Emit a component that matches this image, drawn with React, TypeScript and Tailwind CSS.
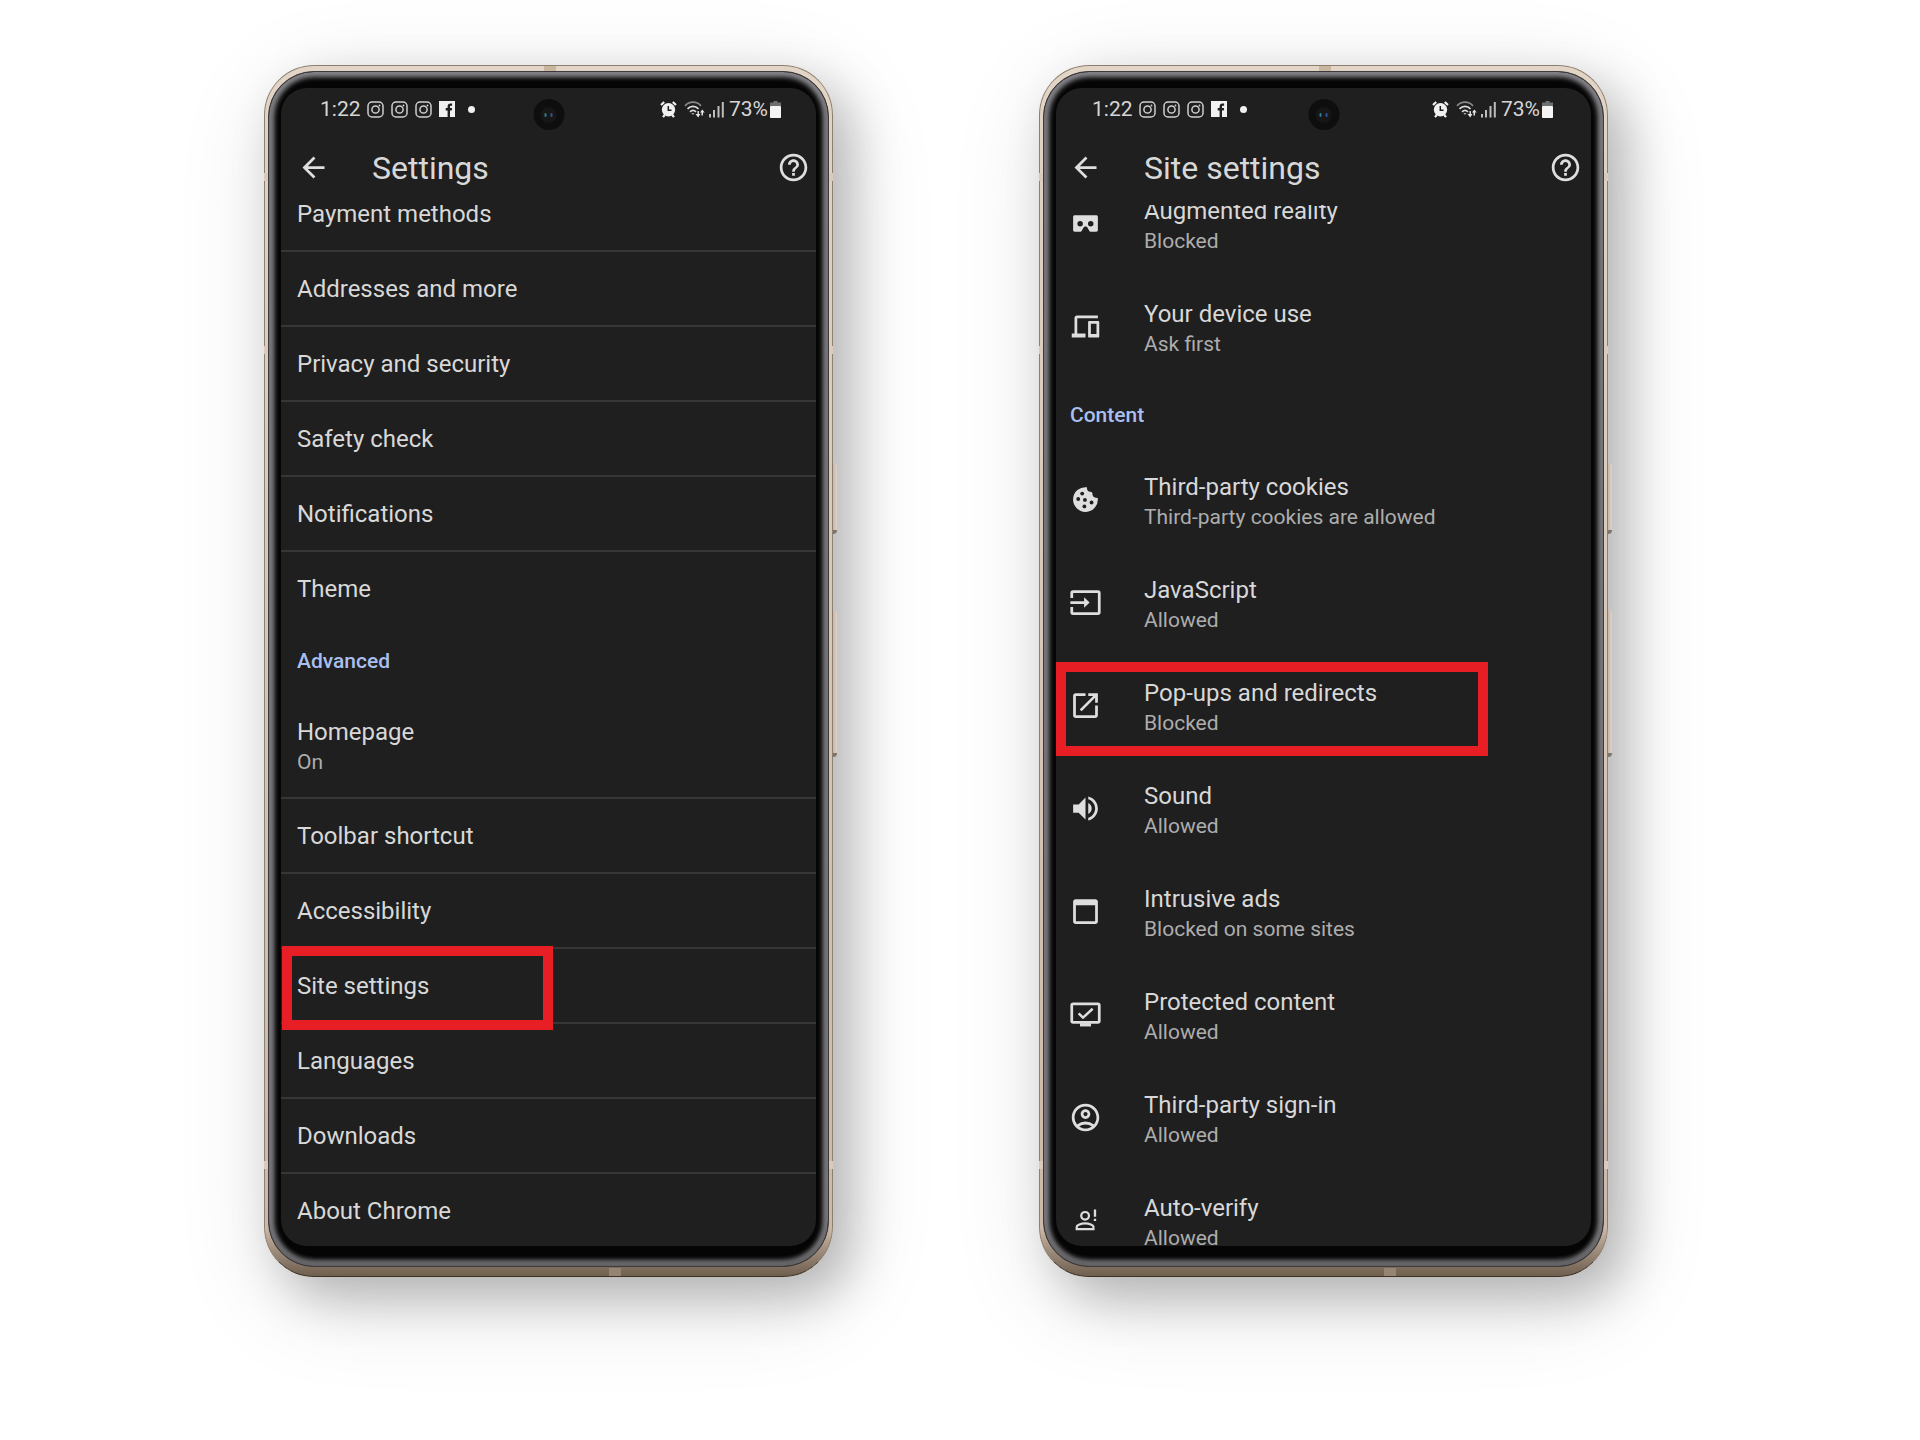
import type { ReactNode } from "react";
import {
  MdArrowBack,
  MdHelpOutline,
  MdOpenInNew,
  MdOutlineAccountCircle,
  MdVolumeUp,
} from "react-icons/md";

const ICON = "size-[33px] shrink-0 text-[#dedede]";

function CardboardIcon() {
  return (
    <svg viewBox="0 0 24 24" className={ICON} fill="currentColor" aria-hidden="true">
      <path
        fillRule="evenodd"
        d="M4.2 6h15.6c.7 0 1.2.5 1.2 1.2v9.6c0 .7-.5 1.2-1.2 1.2h-4c-.5 0-.9-.3-1.1-.7l-1.2-2.300c-.6-1.200-2.400-1.200-3 0l-1.200 2.300c-.2.400-.6.700-1.100.7h-4C3.500 18 3 17.500 3 16.800V7.200C3 6.500 3.500 6 4.200 6Zm3.900 4.200a2 2 0 1 0 0 4 2 2 0 0 0 0-4Zm7.700 0a2 2 0 1 0 0 4 2 2 0 0 0 0-4Z"
      />
    </svg>
  );
}

function DevicesIcon() {
  return (
    <svg viewBox="0 0 24 24" className={ICON} fill="currentColor" aria-hidden="true">
      <path d="M4 17V5.800C4 4.800 4.800 4 5.800 4H21v2H6v11h6v3H2v-3h2Z" />
      <path
        fillRule="evenodd"
        d="M14.700 8h6.500c.5 0 .8.300.8.800v10.400c0 .5-.3.800-.8.800h-6.500c-.5 0-.8-.3-.8-.8V8.800c0-.5.300-.8.800-.8Zm1.200 2v7.500H20V10h-4.100Z"
      />
    </svg>
  );
}

function CookieIcon() {
  return (
    <svg viewBox="0 0 24 24" className={ICON} aria-hidden="true">
      <path
        fill="currentColor"
        d="M13.100 3.100c-.3 1.700.6 3 2.300 3.200 1.300.1 1.800.9 1.700 2 0 1.500 1.400 2.400 3.800 2.600A9 9 0 1 1 13.100 3.100Z"
      />
      <g fill="#1f1f1f">
        <circle cx="9.600" cy="7.700" r="1.400" />
        <circle cx="6.700" cy="11.600" r="1.400" />
        <circle cx="11.600" cy="12.300" r="1.400" />
        <circle cx="16.400" cy="14.200" r="1.400" />
        <circle cx="11.200" cy="17" r="1.400" />
      </g>
    </svg>
  );
}

function InputIcon() {
  return (
    <svg viewBox="0 0 24 24" className={ICON} fill="none" aria-hidden="true">
      <path
        stroke="currentColor"
        strokeWidth="2"
        d="M2 8.800V5c0-.6.400-1 1-1h18c.6 0 1 .4 1 1v14c0 .6-.4 1-1 1H3c-.6 0-1-.4-1-1v-3.800M1 12h11"
      />
      <path fill="currentColor" d="M11 8.200 15 12l-4 3.800Z" />
    </svg>
  );
}

function WindowIcon() {
  return (
    <svg viewBox="0 0 24 24" className={ICON} fill="currentColor" aria-hidden="true">
      <path
        fillRule="evenodd"
        d="M4.800 3h14.400C20.200 3 21 3.800 21 4.800v14.400c0 1-.8 1.800-1.800 1.800H4.800c-1 0-1.800-.8-1.800-1.800V4.800C3 3.800 3.800 3 4.800 3ZM5 7.500V19h14V7.500H5Z"
      />
    </svg>
  );
}

function MonitorCheckIcon() {
  return (
    <svg viewBox="0 0 24 24" className={ICON} fill="none" stroke="currentColor" aria-hidden="true">
      <rect x="2" y="4.300" width="20" height="13.400" rx="1" strokeWidth="2" />
      <path d="M8 19.500h8" strokeWidth="2.400" />
      <path d="m7 11.200 3.200 3.100 7-6.500" strokeWidth="1.800" />
    </svg>
  );
}

function PersonAlertIcon() {
  return (
    <svg viewBox="0 0 24 24" className={ICON} fill="none" stroke="currentColor" aria-hidden="true">
      <circle cx="11.700" cy="8.600" r="2.800" strokeWidth="1.600" />
      <path
        d="M5.600 18.200v-1.400c0-1.600 3.200-2.700 6.100-2.700s6.100 1.100 6.100 2.700v1.400Z"
        strokeWidth="1.600"
      />
      <path d="M18.900 4v5.300M18.900 10.700v1.700" strokeWidth="1.700" />
    </svg>
  );
}

function InstagramIcon() {
  return (
    <svg viewBox="0 0 17 17" className="size-[17px]" fill="none" stroke="#cfcfcf" aria-hidden="true">
      <rect x="1" y="1" width="15" height="15" rx="4" strokeWidth="1.500" />
      <circle cx="8.500" cy="8.500" r="3.600" strokeWidth="1.500" />
      <circle cx="12.500" cy="4.500" r=".9" fill="#cfcfcf" stroke="none" />
    </svg>
  );
}

function FacebookIcon() {
  return (
    <svg viewBox="0 0 16 16" className="size-4" aria-hidden="true">
      <rect width="16" height="16" fill="#f1f1f1" />
      <path
        d="M8.600 16V9.600H6.700V7.100h1.900V5.600c0-2 1.100-3.100 2.900-3.100h1.600v2.300h-1.100c-.7 0-1 .4-1 1v1.300h2.100l-.3 2.500h-1.800V16Z"
        fill="#1f1f1f"
      />
    </svg>
  );
}

function AlarmIcon() {
  return (
    <svg viewBox="0 0 17 17" className="size-[17px]" fill="none" aria-hidden="true">
      <circle cx="8.500" cy="8.800" r="6.700" fill="#f1f1f1" />
      <path
        d="M1 4 4.200 1M16 4l-3.200-3M3 16.200l1.700-2.200M14 16.200l-1.700-2.200"
        stroke="#f1f1f1"
        strokeWidth="2.200"
      />
      <path d="M8.300 5v4.300h3.200" stroke="#1f1f1f" strokeWidth="1.500" />
    </svg>
  );
}

function WifiIcon() {
  return (
    <svg viewBox="0 0 21 17" className="h-[17px] w-[21px]" fill="none" aria-hidden="true">
      <path d="M1 4.800C5.500 0 12.500 0 17 4.800" stroke="#8a8a8a" strokeWidth="1.700" />
      <path d="M3.500 7.900c3.200-3.300 7.800-3.300 11 0" stroke="#dcdcdc" strokeWidth="1.700" />
      <path d="M6 10.800c1.800-1.800 4.200-1.800 6 0" stroke="#dcdcdc" strokeWidth="1.700" />
      <path d="m7.300 12.300 1.700 1.500 1.500-1.500Z" fill="#dcdcdc" />
      <path d="M13.500 10v3h-2l2.700 3.500 2.200-3.500h-1.500v-3Z" fill="#e6e6e6" />
      <path d="M17.500 14.500v-3H16l2.300-3 2.400 3H19v3Z" fill="#e6e6e6" />
    </svg>
  );
}

function SignalIcon() {
  return (
    <svg viewBox="0 0 15 17" className="h-[17px] w-[15px]" fill="#bdbdbd" aria-hidden="true">
      <rect x="0" y="13" width="2" height="3.500" />
      <rect x="4" y="9" width="2" height="7.500" />
      <rect x="8.500" y="5" width="2" height="11.500" />
      <rect x="12.800" y="1" width="2" height="15.500" />
    </svg>
  );
}

function BatteryIcon() {
  return (
    <svg viewBox="0 0 11 17" className="h-[17px] w-[11px]" aria-hidden="true">
      <path d="M3.500 0h4v1.500H11V5H0V1.500h3.500Z" fill="#6f6f6f" />
      <rect y="5" width="11" height="12" rx=".8" fill="#f4f4f4" />
    </svg>
  );
}

function Row({
  title,
  detail,
  icon,
  inset,
  divider = false,
  highlight,
}: {
  title: string;
  detail?: string;
  icon?: ReactNode;
  inset: string;
  divider?: boolean;
  highlight?: string;
}) {
  const height = detail ? "h-[103px]" : divider ? "h-[75px]" : "h-[73px]";
  return (
    <li className={`relative ${height} ${divider ? "border-b-2 border-[#373737]" : ""}`}>
      <button
        type="button"
        className={`flex size-full items-center gap-[42px] pb-1 text-left ${inset}`}
      >
        {icon}
        <span className="flex flex-col pt-[5px]">
          <span className="text-2xl leading-[30px] text-[#d8d8d8]">{title}</span>
          {detail && <span className="text-[21px] leading-[30px] text-[#adadad]">{detail}</span>}
        </span>
      </button>
      {highlight && (
        <span
          className={`pointer-events-none absolute z-10 border-[10px] border-[#e81e25] ${highlight}`}
        />
      )}
    </li>
  );
}

function SectionTitle({ inset, children }: { inset: string; children: string }) {
  return (
    <h2
      className={`flex items-center text-[21px] font-medium leading-[30px] text-[#a9bfef] ${inset}`}
    >
      {children}
    </h2>
  );
}

function Phone({
  title,
  inset,
  statusInset,
  headerEnd,
  listOffset,
  children,
}: {
  title: string;
  inset: string;
  statusInset: string;
  headerEnd: string;
  listOffset: string;
  children: ReactNode;
}) {
  return (
    <section
      aria-label={title}
      className="relative w-full max-w-[569px] rounded-[50px] border border-[#8d7f70] border-b-[#3d3226] bg-linear-to-b from-[#e2d5c5] from-0% via-[#cdb9a8] via-96% to-[#6f5f4f] to-100% px-[3px] pb-[9px] pt-[5px] shadow-[18px_20px_50px_rgba(0,0,0,0.24),8px_24px_100px_rgba(0,0,0,0.12)]"
    >
      <span className="absolute -right-[5px] top-[397px] h-[71px] w-1 rounded-r-sm border-b-4 border-b-[#7d736b] bg-linear-to-r from-[#c7b6a8] to-[#ddd3cb]" />
      <span className="absolute -right-[5px] top-[544px] h-[147px] w-1 rounded-r-sm border-b-4 border-b-[#7d736b] bg-linear-to-r from-[#c7b6a8] to-[#ddd3cb]" />
      <span className="absolute -left-px top-[107px] h-2 w-1 bg-[#dccbbd]" />
      <span className="absolute -right-px top-[107px] h-2 w-1 bg-[#dccbbd]" />
      <span className="absolute -left-px top-[280px] h-2 w-1 bg-[#dccbbd]" />
      <span className="absolute -right-px top-[280px] h-2 w-1 bg-[#dccbbd]" />
      <span className="absolute -left-px bottom-[107px] h-2 w-1 bg-[#dccbbd]" />
      <span className="absolute -right-px bottom-[107px] h-2 w-1 bg-[#dccbbd]" />
      <span className="absolute left-[279px] top-0 h-[5px] w-3 bg-[#c9b69f]" />
      <span className="absolute bottom-0 left-[344px] h-2 w-3 bg-[#958473]" />

      <div className="rounded-[46px] border border-[#3c3a3c] bg-[#050505] px-3 pb-5 pt-4 shadow-[inset_0_-4px_6px_#5c5c5e,inset_0_0_5px_5px_#8b8a8f]">
        <div className="relative h-[1158px] overflow-hidden rounded-[26px] bg-[#1f1f1f]">
          <span className="absolute left-1/2 top-[11px] flex size-[31px] -translate-x-1/2 items-center justify-center rounded-full bg-[#0e0e0e]">
            <span className="flex size-4 items-center justify-center gap-1 rounded-full bg-[#161616]">
              <span className="h-1 w-[2px] rounded-full bg-[#2c7f86]" />
              <span className="h-1 w-[2px] rounded-full bg-[#39519a]" />
            </span>
          </span>

          <div
            className={`flex h-[42px] items-center justify-between text-[21px] leading-6 text-[#d6d6d6] ${statusInset}`}
          >
            <div className="flex items-center gap-[7px]">
              <span>1:22</span>
              <span className="-ml-px flex gap-[7px]">
                <InstagramIcon />
                <InstagramIcon />
                <InstagramIcon />
              </span>
              <FacebookIcon />
              <span className="ml-1.5 size-[7px] rounded-full bg-[#f1f1f1]" />
            </div>
            <div className="flex items-center">
              <AlarmIcon />
              <span className="ml-[7px] flex">
                <WifiIcon />
              </span>
              <span className="ml-1 mr-[5px] flex">
                <SignalIcon />
              </span>
              <span className="mr-[2px]">73%</span>
              <BatteryIcon />
            </div>
          </div>

          <header className={`flex h-[75px] items-center ${inset} ${headerEnd}`}>
            <button type="button" aria-label="Back">
              <MdArrowBack className={ICON} />
            </button>
            <h1 className="ml-[42px] grow text-[32px] leading-10 text-[#d8d8d8]">{title}</h1>
            <button type="button" aria-label="Help">
              <MdHelpOutline className={ICON} />
            </button>
          </header>

          <div className="h-[1041px] overflow-hidden">
            <div className={listOffset}>{children}</div>
          </div>
        </div>
      </div>
    </section>
  );
}

const BASIC = [
  "Payment methods",
  "Addresses and more",
  "Privacy and security",
  "Safety check",
  "Notifications",
];

const LEFT = "pl-4";
const RIGHT = "pl-[13px]";

export default function App() {
  return (
    <main className="flex min-h-screen items-start justify-center gap-[206px] overflow-hidden bg-white pr-12 pt-[65px] font-['Roboto',sans-serif]">
      <Phone
        title="Settings"
        inset={LEFT}
        statusInset="pl-[39px] pr-[35px]"
        headerEnd="pr-[6px]"
        listOffset="-mt-7"
      >
        <ul>
          {BASIC.map((title) => (
            <Row key={title} title={title} inset={LEFT} divider />
          ))}
          <Row title="Theme" inset={LEFT} />
        </ul>
        <SectionTitle inset="h-[71px] pl-4">Advanced</SectionTitle>
        <ul>
          <Row title="Homepage" detail="On" inset={LEFT} divider />
          <Row title="Toolbar shortcut" inset={LEFT} divider />
          <Row title="Accessibility" inset={LEFT} divider />
          <Row
            title="Site settings"
            inset={LEFT}
            divider
            highlight="left-px -top-[3px] h-[84px] w-[271px]"
          />
          <Row title="Languages" inset={LEFT} divider />
          <Row title="Downloads" inset={LEFT} divider />
          <Row title="About Chrome" inset={LEFT} />
        </ul>
      </Phone>

      <Phone
        title="Site settings"
        inset={RIGHT}
        statusInset="pl-[36px] pr-[38px]"
        headerEnd="pr-[9px]"
        listOffset="-mt-[31px]"
      >
        <ul>
          <Row title="Augmented reality" detail="Blocked" inset={RIGHT} icon={<CardboardIcon />} />
          <Row title="Your device use" detail="Ask first" inset={RIGHT} icon={<DevicesIcon />} />
        </ul>
        <SectionTitle inset="h-[70px] pl-[14px]">Content</SectionTitle>
        <ul>
          <Row
            title="Third-party cookies"
            detail="Third-party cookies are allowed"
            inset={RIGHT}
            icon={<CookieIcon />}
          />
          <Row title="JavaScript" detail="Allowed" inset={RIGHT} icon={<InputIcon />} />
          <Row
            title="Pop-ups and redirects"
            detail="Blocked"
            inset={RIGHT}
            icon={<MdOpenInNew className={ICON} />}
            highlight="left-0 top-[6px] h-[94px] w-[432px]"
          />
          <Row
            title="Sound"
            detail="Allowed"
            inset={RIGHT}
            icon={<MdVolumeUp className={ICON} />}
          />
          <Row
            title="Intrusive ads"
            detail="Blocked on some sites"
            inset={RIGHT}
            icon={<WindowIcon />}
          />
          <Row
            title="Protected content"
            detail="Allowed"
            inset={RIGHT}
            icon={<MonitorCheckIcon />}
          />
          <Row
            title="Third-party sign-in"
            detail="Allowed"
            inset={RIGHT}
            icon={<MdOutlineAccountCircle className={ICON} />}
          />
          <Row title="Auto-verify" detail="Allowed" inset={RIGHT} icon={<PersonAlertIcon />} />
        </ul>
      </Phone>
    </main>
  );
}
